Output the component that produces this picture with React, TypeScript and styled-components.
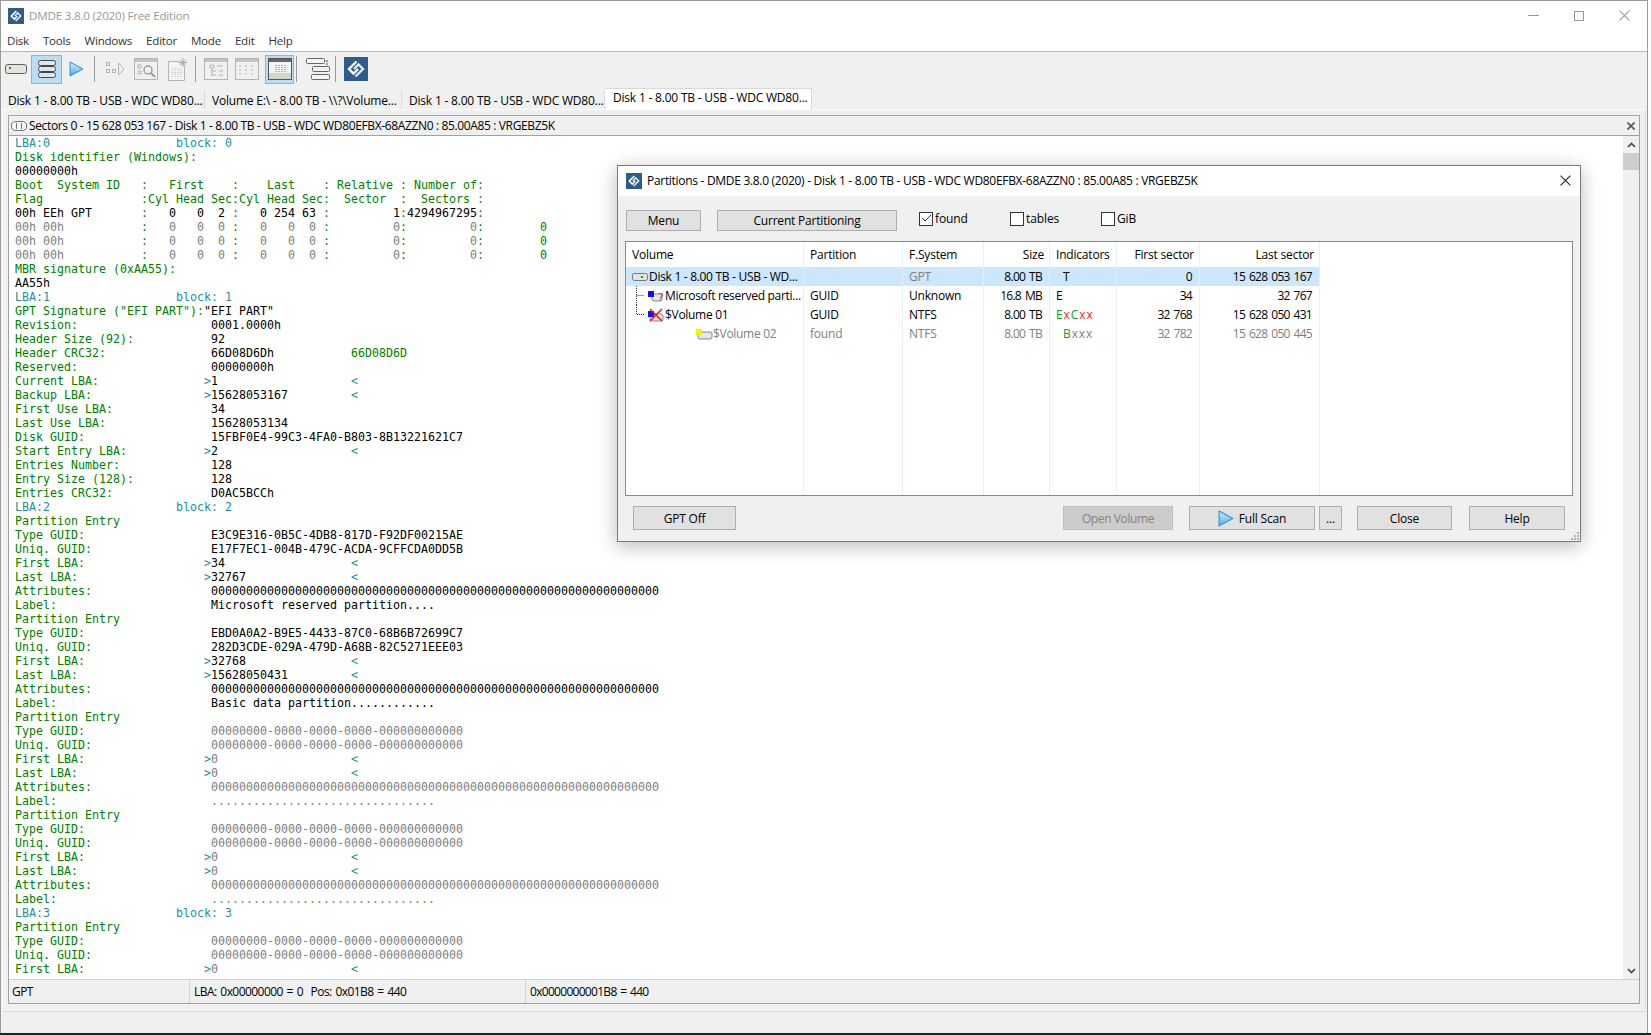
import React from 'react';
import styled, { createGlobalStyle } from 'styled-components';

const GlobalStyle = createGlobalStyle`
  html, body {
    margin: 0;
    padding: 0;
    background: #fff;
    overflow: hidden;
  }
  body {
    font-family: "Open Sans", "Noto Sans", sans-serif;
    font-size: 11.6px;
    color: #000;
  }
`;

const Desktop = styled.div`
  position: relative;
  width: 1651px;
  height: 1035px;
  background: #fff;
  border-bottom: 2px solid #222;
  box-sizing: border-box;
`;

const Frame = styled.div`
  display: flex;
  flex-direction: column;
  width: 1648px;
  height: 1033px;
  box-sizing: border-box;
  border: 1px solid #9a9a9a;
  border-bottom: none;
  background: #f0f0f0;
`;

const TitleBar = styled.div`
  display: flex;
  align-items: center;
  height: 30px;
  flex: none;
  padding-left: 7px;
  background: #fff;
  color: #999;
  font-size: 11.6px;
  letter-spacing: -0.2px;
`;

const TitleText = styled.span`
  margin-left: 5px;
  margin-top: -1px;
`;

const WindowControls = styled.div`
  display: flex;
  align-items: center;
  margin-left: auto;
  margin-top: -1px;
  padding-right: 17px;
  gap: 35px;
`;

const MenuBar = styled.div`
  display: flex;
  align-items: center;
  height: 21px;
  flex: none;
  box-sizing: border-box;
  background: #fff;
  border-bottom: 1px solid #b8b8b8;
  padding: 0 0 2px 6px;
  gap: 14px;
  color: #333;
  font-size: 11.6px;
  letter-spacing: -0.25px;
`;

const Toolbar = styled.div`
  display: flex;
  align-items: center;
  height: 36px;
  flex: none;
  box-sizing: border-box;
  padding: 0 0 2px 2px;
`;

const ToolButton = styled.div<{ $w: number; $gap?: number; $active?: boolean }>`
  display: flex;
  align-items: center;
  justify-content: center;
  flex: none;
  box-sizing: border-box;
  width: ${(p) => p.$w}px;
  height: 29px;
  margin-left: ${(p) => p.$gap ?? 0}px;
  background: ${(p) => (p.$active ? '#bcdcf4' : 'transparent')};
  border: 1px solid ${(p) => (p.$active ? '#7cb8e8' : 'transparent')};
`;

const ToolSep = styled.div<{ $gap: number }>`
  width: 1px;
  height: 26px;
  flex: none;
  margin-left: ${(p) => p.$gap}px;
  background: #9a9a9a;
`;

const TabBar = styled.div`
  display: flex;
  align-items: flex-end;
  height: 21px;
  flex: none;
`;

const Tab = styled.div<{ $w: number; $active?: boolean }>`
  flex: none;
  box-sizing: border-box;
  width: ${(p) => p.$w}px;
  height: ${(p) => (p.$active ? 22 : 19)}px;
  margin-bottom: ${(p) => (p.$active ? -1 : 0)}px;
  padding-left: ${(p) => (p.$active ? 8 : 7)}px;
  line-height: ${(p) => (p.$active ? 18 : 19)}px;
  white-space: nowrap;
  font-size: 12px;
  letter-spacing: -0.2px;
  background: ${(p) => (p.$active ? '#fff' : '#f0f0f0')};
  border-right: 1px solid #d9d9d9;
  border-top: 1px solid ${(p) => (p.$active ? '#d9d9d9' : '#f0f0f0')};
  position: relative;
  z-index: 1;
`;

const TabPage = styled.div`
  display: flex;
  flex: none;
  height: 903px;
  margin-right: 1px;
  margin-left: 1px;
  box-sizing: border-box;
  padding: 5px 5px 7px 5px;
  border: 1px solid #fff;
  border-right-color: #e0e0e0;
  border-bottom-color: #dcdcdc;
`;

const Panel = styled.div`
  display: flex;
  flex-direction: column;
  flex: 1;
  min-width: 0;
  border: 1px solid #a0a0a0;
`;

const PanelTitle = styled.div`
  display: flex;
  align-items: center;
  height: 19px;
  flex: none;
  padding-left: 2px;
  background: #f0f0f0;
  border-bottom: 1px solid #a0a0a0;
  font-size: 12px;
`;

const PanelTitleText = styled.span`
  margin-left: 2px;
  white-space: nowrap;
  letter-spacing: -0.36px;
`;

const PanelClose = styled.div`
  margin-left: auto;
  display: flex;
  padding-right: 4px;
`;

const PanelBody = styled.div`
  display: flex;
  flex: 1;
  min-height: 0;
  background: #fff;
`;

const HexView = styled.pre`
  flex: 1;
  margin: 0;
  padding: 0 0 0 6px;
  overflow: hidden;
  font-family: "DejaVu Sans Mono", "Liberation Mono", monospace;
  font-size: 11.63px;
  line-height: 14px;
  color: #000;
`;

const HexLine = styled.div`
  height: 14px;
  white-space: pre;
`;

const Ink = styled.span<{ $c: string }>`
  color: ${(p) => p.$c};
`;

const ScrollBar = styled.div`
  display: flex;
  flex-direction: column;
  width: 16px;
  flex: none;
  background: #f0f0f0;
`;

const ScrollArrow = styled.div`
  display: flex;
  align-items: center;
  justify-content: center;
  height: 17px;
  flex: none;
`;

const ScrollThumb = styled.div`
  height: 17px;
  flex: none;
  background: #cdcdcd;
`;

const ScrollSpace = styled.div`
  flex: 1;
`;

const StatusBar = styled.div`
  display: flex;
  align-items: center;
  height: 23px;
  flex: none;
  background: #f0f0f0;
  border-top: 1px solid #d0d0d0;
  font-size: 12px;
  letter-spacing: -0.55px;
  word-spacing: 1.2px;
`;

const StatusCell = styled.div<{ $w: number }>`
  display: flex;
  align-items: center;
  width: ${(p) => p.$w}px;
  height: 100%;
  flex: none;
  box-sizing: border-box;
  padding-left: 3px;
  border-right: 1px solid #d0d0d0;
  white-space: pre;
`;

const StatusCellWide = styled(StatusCell)`
  padding-left: 4px;
`;

const StatusCellLast = styled(StatusCellWide)`
  border-right: none;
  letter-spacing: -0.7px;
`;

const Dialog = styled.div`
  position: absolute;
  left: 617px;
  top: 165px;
  width: 964px;
  height: 377px;
  box-sizing: border-box;
  display: flex;
  flex-direction: column;
  border: 1px solid #7a7a7a;
  background: #f0f0f0;
  box-shadow: 0 4px 18px rgba(0, 0, 0, 0.28);
`;

const DialogTitle = styled.div`
  display: flex;
  align-items: center;
  height: 30px;
  flex: none;
  padding: 0 0 1px 8px;
  box-sizing: border-box;
  background: #fff;
  font-size: 12px;
`;

const DialogTitleText = styled.span`
  margin-left: 5px;
  white-space: nowrap;
  letter-spacing: -0.3px;
`;

const DialogClose = styled.div`
  display: flex;
  margin-left: auto;
  padding-right: 9px;
`;

const DialogTop = styled.div`
  display: flex;
  align-items: center;
  height: 21px;
  flex: none;
  margin-top: 14px;
  padding-left: 8px;
`;

const Button = styled.div<{ $w: number; $h?: number; $gap?: number; $disabled?: boolean }>`
  display: flex;
  align-items: center;
  justify-content: center;
  flex: none;
  box-sizing: border-box;
  width: ${(p) => p.$w}px;
  height: ${(p) => p.$h ?? 21}px;
  margin-left: ${(p) => p.$gap ?? 0}px;
  font-size: 12px;
  letter-spacing: ${(p) => (p.$disabled ? -0.4 : -0.2)}px;
  background: ${(p) => (p.$disabled ? '#cccccc' : '#e1e1e1')};
  color: ${(p) => (p.$disabled ? '#838383' : '#000')};
  border: 1px solid ${(p) => (p.$disabled ? '#bfbfbf' : '#adadad')};
  white-space: nowrap;
`;

const CheckField = styled.div<{ $gap?: number }>`
  display: flex;
  align-items: center;
  width: 91px;
  flex: none;
  margin-left: ${(p) => p.$gap ?? 0}px;
  margin-top: -4px;
  gap: 2px;
  font-size: 12px;
  letter-spacing: -0.1px;
`;

const CheckBox = styled.div`
  display: flex;
  align-items: center;
  justify-content: center;
  box-sizing: border-box;
  width: 14px;
  height: 14px;
  flex: none;
  background: #fff;
  border: 1px solid #333;
`;

const ListBox = styled.div`
  display: flex;
  flex-direction: column;
  height: 255px;
  flex: none;
  margin: 10px 7px 0 7px;
  box-sizing: border-box;
  background: #fff;
  border: 1px solid #8a8a8a;
  font-size: 12px;
  letter-spacing: -0.2px;
`;

const GRID = '178px 99px 81px 66px 67px 83px 120px';

const ListRow = styled.div<{ $selected?: boolean; $muted?: boolean }>`
  display: grid;
  grid-template-columns: ${GRID};
  width: 694px;
  height: 19px;
  flex: none;
  line-height: 18px;
  white-space: nowrap;
  background: ${(p) => (p.$selected ? '#cce6fc' : 'transparent')};
  color: ${(p) => (p.$muted ? '#808080' : '#000')};
`;

const ListHead = styled(ListRow)`
  height: 25px;
  line-height: 24px;
`;

const ListFill = styled(ListRow)`
  flex: 1;
`;

const Cell = styled.div<{ $right?: boolean; $muted?: boolean; $num?: boolean }>`
  display: flex;
  align-items: center;
  justify-content: ${(p) => (p.$right ? 'flex-end' : 'flex-start')};
  box-sizing: border-box;
  padding: ${(p) => (p.$right ? '0 7px 0 0' : '0 0 0 6px')};
  border-right: 1px solid #e6f0fb;
  overflow: hidden;
  color: ${(p) => (p.$muted ? '#808080' : 'inherit')};
  letter-spacing: ${(p) => (p.$num ? '-0.72px' : 'inherit')};
  word-spacing: ${(p) => (p.$num ? '1.5px' : 'normal')};

  svg {
    flex: none;
  }
`;

const VolumeCell = styled(Cell)<{ $indent: number }>`
  padding-left: ${(p) => p.$indent}px;
  letter-spacing: -0.3px;
`;

const HeadCell = styled(Cell)`
  padding-right: ${(p) => (p.$right ? 5 : 0)}px;
`;

const Marks = styled.span<{ $pad: number }>`
  padding-left: ${(p) => p.$pad}px;
  letter-spacing: 0.9px;
`;

const DialogBottom = styled.div`
  display: flex;
  align-items: center;
  height: 24px;
  flex: none;
  margin-top: 10px;
  padding-left: 15px;
`;

const ScanLabel = styled.span`
  margin-left: 5px;
`;

const Grip = styled.div`
  position: absolute;
  right: 1px;
  bottom: 1px;
  display: flex;
`;

const Logo: React.FC<{ size: number }> = ({ size }) => (
  <svg width={size} height={size} viewBox="0 0 24 24">
    <rect width="24" height="24" fill="#2f5c88" />
    <path d="M12.5 4.5 L5 12 L9.5 16.5 L14 12" fill="none" stroke="#fff" strokeWidth="2.4" />
    <path d="M11.5 19.5 L19 12 L14.5 7.5 L10 12" fill="none" stroke="#dfe9f2" strokeWidth="2.4" />
  </svg>
);

const DriveIcon: React.FC = () => (
  <svg width="22" height="12" viewBox="0 0 22 12">
    <rect x="0.5" y="1.5" width="21" height="9" rx="2" fill="#e4e2dc" stroke="#5f5f5f" />
    <rect x="4" y="4" width="2" height="2" fill="#1aa51a" />
  </svg>
);

const StackIcon: React.FC = () => (
  <svg width="20" height="18" viewBox="0 0 20 18" fill="#dfe6ea" stroke="#444">
    <rect x="1.5" y="0.5" width="17" height="5" rx="2" />
    <rect x="1.5" y="6.5" width="17" height="5" rx="2" />
    <rect x="1.5" y="12.5" width="17" height="5" rx="2" />
  </svg>
);

const PlayIcon: React.FC<{ w: number; h: number }> = ({ w, h }) => (
  <svg width={w} height={h} viewBox="0 0 15 16">
    <defs>
      <linearGradient id="playFill" x1="0" y1="0" x2="0" y2="1">
        <stop offset="0" stopColor="#d4efff" />
        <stop offset="1" stopColor="#4ea8ea" />
      </linearGradient>
    </defs>
    <path d="M1 1 L14 8 L1 15 Z" fill="url(#playFill)" stroke="#2f8fdc" />
  </svg>
);

const FlowIcon: React.FC = () => (
  <svg width="20" height="18" viewBox="0 0 20 18" fill="none" stroke="#b4b4b4">
    <rect x="1.5" y="2.5" width="3" height="3" />
    <rect x="1.5" y="9.5" width="3" height="3" />
    <rect x="7.5" y="9.5" width="3" height="3" />
    <path d="M13.5 3 L19 9 L13.5 15 Z" />
  </svg>
);

const PaneIcon: React.FC<{ kind: 'find' | 'tree' | 'list' | 'grid'; dark?: boolean }> = ({ kind, dark }) => (
  <svg width="24" height="22" viewBox="0 0 24 22" fill="none" stroke={dark ? '#555' : '#b4b4b4'}>
    <rect x="0.5" y="0.5" width="23" height="21" fill={dark ? '#f4f4f4' : '#f0f0f0'} />
    <rect x="1" y="1" width="22" height="3" fill={dark ? '#666' : '#c4c4c4'} stroke="none" />
    {kind === 'find' && (
      <>
        <path d="M4 7h3v3H4zM4 13h3v3H4z" />
        <circle cx="14" cy="12" r="4" stroke="#9a9a9a" strokeWidth="1.4" />
        <path d="M17 15l4 4" stroke="#9a9a9a" strokeWidth="2" />
      </>
    )}
    {kind === 'tree' && (
      <path d="M6 7h4v3H6zM8 10v8M8 13h4M8 17h4M15 13h4M15 17h4M13 8h6" />
    )}
    {kind === 'list' && (
      <path d="M4 8h3M4 12h3M4 16h3M10 8h3M10 12h3M10 16h3M16 8h3M16 12h3M16 16h3" strokeDasharray="2 1" />
    )}
    {kind === 'grid' && (
      <>
        <rect x="1" y="15" width="22" height="6" fill="#d8d2cc" stroke="none" />
        <path d="M8 7v7M11 7v7M14 7v7M17 7v7" stroke="#777" strokeDasharray="1 1" />
      </>
    )}
  </svg>
);

const PageIcon: React.FC = () => (
  <svg width="22" height="24" viewBox="0 0 22 24" fill="none" stroke="#b4b4b4">
    <path d="M1.5 4.5H12L17.5 9V23.5H1.5Z" fill="#f4f4f4" />
    <path d="M5 11v9M8 11v9M11 11v9M14 11v9" strokeDasharray="1 1" />
    <path d="M16 1v9M11.5 5.5h9M13 2.5l6 6M19 2.5l-6 6" stroke="#a8a8a8" />
  </svg>
);

const RowsIcon: React.FC = () => (
  <svg width="24" height="24" viewBox="0 0 24 24" fill="#f4f4f4" stroke="#666">
    <rect x="0.5" y="1.5" width="18" height="5" rx="1" />
    <rect x="6.5" y="9.5" width="17" height="5" rx="1" />
    <rect x="5.5" y="17.5" width="18" height="5" rx="1" />
    <path d="M20 4h2M20 7h2" stroke="#444" />
  </svg>
);

const SmallDrive: React.FC<{ led?: string }> = ({ led }) => (
  <svg width="17" height="10" viewBox="0 0 17 10">
    <rect x="0.5" y="1.5" width="15" height="7" rx="2" fill="#e6e4df" stroke="#777" />
    {led && <rect x="9" y="4" width="2" height="2" fill={led} />}
  </svg>
);

const ReservedIcon: React.FC = () => (
  <svg width="21" height="12" viewBox="0 0 21 12">
    <rect x="8" y="4" width="10" height="7" rx="2" fill="#e6e4df" stroke="#888" />
    <rect x="4" y="1" width="6" height="6" fill="#1414e0" />
    <text x="14.5" y="10.5" fontSize="11" fill="#555" fontFamily="Open Sans, sans-serif">?</text>
  </svg>
);

const DamagedIcon: React.FC = () => (
  <svg width="21" height="14" viewBox="0 0 21 14">
    <rect x="6" y="6" width="13" height="7" rx="2" fill="#e6e4df" stroke="#888" />
    <rect x="4" y="3" width="6" height="6" fill="#1414e0" />
    <path d="M6 1 L18 13 M18 1 L6 13" stroke="#f01818" strokeWidth="1.5" />
  </svg>
);

const FoundIcon: React.FC = () => (
  <svg width="17" height="12" viewBox="0 0 17 12">
    <rect x="2" y="4" width="14" height="7" rx="2" fill="#e6e4df" stroke="#888" />
    <rect x="0" y="1" width="6" height="6" fill="#f4f400" />
  </svg>
);

const TreeGuide: React.FC<{ last?: boolean }> = ({ last }) => (
  <svg width="8" height="19" viewBox="0 0 8 19" fill="none" stroke="#333" strokeDasharray="1 1">
    <path d={last ? 'M0.5 0V9.5H8' : 'M0.5 0V19M0.5 9.5H8'} />
  </svg>
);

const Cross: React.FC<{ size: number; color: string; w?: number }> = ({ size, color, w = 1 }) => (
  <svg width={size} height={size} viewBox="0 0 10 10" stroke={color} strokeWidth={w} fill="none">
    <path d="M0.5 0.5 L9.5 9.5 M9.5 0.5 L0.5 9.5" />
  </svg>
);

const Chevron: React.FC<{ down?: boolean }> = ({ down }) => (
  <svg width="9" height="6" viewBox="0 0 9 6" fill="none" stroke="#444" strokeWidth="1.6">
    <path d={down ? 'M1 1l3.5 3.5L8 1' : 'M1 5l3.5-3.5L8 5'} />
  </svg>
);

const ChipIcon: React.FC = () => (
  <svg width="16" height="12" viewBox="0 0 16 12" fill="#f4f4f4" stroke="#777">
    <path d="M3.5 1.5h9l3 2v5l-3 2h-9l-3-2v-5Z" />
    <path d="M5.5 3v6M10.5 3v6" />
  </svg>
);

const INK: Record<string, string> = {
  g: '#008000',
  k: '#000000',
  a: '#808080',
  t: '#1f8fa0',
};

const pad = (s: string, n: number) => s.padEnd(n, ' ');
const ZEROS = '0'.repeat(64);
const NULL_GUID = '00000000-0000-0000-0000-000000000000';

const field = (label: string, value: string, muted = false) =>
  `~g${pad(label, 28)}~${muted ? 'a' : 'k'}${value}`;
const bound = (label: string, value: string, muted = false) =>
  `~g${pad(label, 27)}~t>~${muted ? 'a' : 'k'}${pad(value, 20)}~t<`;
const blockHead = (n: number) => `~t${pad(`LBA:${n}`, 23)}block: ${n}`;
const zeroRow = '~a00h 00h           ~g:~a   0   0  0 ~g:~a   0   0  0 ~g:~a         0~g:~a         0~g:        0';

const entry = (type: string, uniq: string, first: string, last: string, label: string) => [
  '~gPartition Entry',
  field('Type GUID:', type),
  field('Uniq. GUID:', uniq),
  bound('First LBA:', first),
  bound('Last LBA:', last),
  field('Attributes:', ZEROS),
  field('Label:', label),
];

const emptyEntry = [
  '~gPartition Entry',
  field('Type GUID:', NULL_GUID, true),
  field('Uniq. GUID:', NULL_GUID, true),
  bound('First LBA:', '0', true),
  bound('Last LBA:', '0', true),
  field('Attributes:', ZEROS, true),
  field('Label:', '.'.repeat(32), true),
];

const SECTOR_LINES: string[] = [
  blockHead(0),
  '~gDisk identifier (Windows):',
  '~k00000000h',
  '~gBoot  System ID   :   First    :    Last    : Relative : Number of:',
  '~gFlag              :Cyl Head Sec:Cyl Head Sec:  Sector  :  Sectors :',
  '~k00h EEh GPT       ~g:~k   0   0  2 ~g:~k   0 254 63 ~g:~k         1~g:~k4294967295~g:',
  zeroRow,
  zeroRow,
  zeroRow,
  '~gMBR signature (0xAA55):',
  '~kAA55h',
  blockHead(1),
  '~gGPT Signature ("EFI PART"):~k"EFI PART"',
  field('Revision:', '0001.0000h'),
  field('Header Size (92):', '92'),
  `${field('Header CRC32:', pad('66D08D6Dh', 20))}~g66D08D6D`,
  field('Reserved:', '00000000h'),
  bound('Current LBA:', '1'),
  bound('Backup LBA:', '15628053167'),
  field('First Use LBA:', '34'),
  field('Last Use LBA:', '15628053134'),
  field('Disk GUID:', '15FBF0E4-99C3-4FA0-B803-8B13221621C7'),
  bound('Start Entry LBA:', '2'),
  field('Entries Number:', '128'),
  field('Entry Size (128):', '128'),
  field('Entries CRC32:', 'D0AC5BCCh'),
  blockHead(2),
  ...entry(
    'E3C9E316-0B5C-4DB8-817D-F92DF00215AE',
    'E17F7EC1-004B-479C-ACDA-9CFFCDA0DD5B',
    '34',
    '32767',
    'Microsoft reserved partition....',
  ),
  ...entry(
    'EBD0A0A2-B9E5-4433-87C0-68B6B72699C7',
    '282D3CDE-029A-479D-A68B-82C5271EEE03',
    '32768',
    '15628050431',
    'Basic data partition............',
  ),
  ...emptyEntry,
  ...emptyEntry,
  blockHead(3),
  '~gPartition Entry',
  field('Type GUID:', NULL_GUID, true),
  field('Uniq. GUID:', NULL_GUID, true),
  bound('First LBA:', '0', true),
];

const SectorLine: React.FC<{ source: string }> = ({ source }) => (
  <HexLine>
    {source
      .split('~')
      .filter(Boolean)
      .map((part, i) => (
        <Ink key={i} $c={INK[part[0]]}>
          {part.slice(1)}
        </Ink>
      ))}
  </HexLine>
);

const MENUS = ['Disk', 'Tools', 'Windows', 'Editor', 'Mode', 'Edit', 'Help'];
const DISK_TAB = 'Disk 1 - 8.00 TB - USB - WDC WD80...';

const App: React.FC = () => (
  <Desktop>
    <GlobalStyle />
    <Frame>
      <TitleBar>
        <Logo size={16} />
        <TitleText>DMDE 3.8.0 (2020) Free Edition</TitleText>
        <WindowControls>
          <svg width="11" height="11" viewBox="0 0 11 11" stroke="#999"><path d="M0 5.5h11" /></svg>
          <svg width="10" height="10" viewBox="0 0 10 10" stroke="#999" fill="none"><rect x="0.5" y="0.5" width="9" height="9" /></svg>
          <Cross size={11} color="#999" />
        </WindowControls>
      </TitleBar>
      <MenuBar>
        {MENUS.map((m) => (
          <span key={m}>{m}</span>
        ))}
      </MenuBar>
      <Toolbar>
        <ToolButton $w={26}><DriveIcon /></ToolButton>
        <ToolButton $w={31} $gap={2} $active><StackIcon /></ToolButton>
        <ToolButton $w={24} $gap={2}><PlayIcon w={15} h={16} /></ToolButton>
        <ToolSep $gap={6} />
        <ToolButton $w={28} $gap={6}><FlowIcon /></ToolButton>
        <ToolButton $w={28} $gap={3}><PaneIcon kind="find" /></ToolButton>
        <ToolButton $w={27} $gap={4}><PageIcon /></ToolButton>
        <ToolSep $gap={4} />
        <ToolButton $w={28} $gap={6}><PaneIcon kind="tree" /></ToolButton>
        <ToolButton $w={28} $gap={3}><PaneIcon kind="list" /></ToolButton>
        <ToolButton $w={29} $gap={4} $active><PaneIcon kind="grid" dark /></ToolButton>
        <ToolSep $gap={2} />
        <ToolButton $w={27} $gap={7}><RowsIcon /></ToolButton>
        <ToolSep $gap={4} />
        <ToolButton $w={26} $gap={7}><Logo size={24} /></ToolButton>
      </Toolbar>
      <TabBar>
        <Tab $w={204}>{DISK_TAB}</Tab>
        <Tab $w={197}>Volume E:\ - 8.00 TB - \\?\Volume...</Tab>
        <Tab $w={203}>{DISK_TAB}</Tab>
        <Tab $w={207} $active>{DISK_TAB}</Tab>
      </TabBar>
      <TabPage>
        <Panel>
          <PanelTitle>
            <ChipIcon />
            <PanelTitleText>
              Sectors 0 - 15 628 053 167 - Disk 1 - 8.00 TB - USB - WDC WD80EFBX-68AZZN0 : 85.00A85 : VRGEBZ5K
            </PanelTitleText>
            <PanelClose><Cross size={8} color="#555" w={2} /></PanelClose>
          </PanelTitle>
          <PanelBody>
            <HexView>
              {SECTOR_LINES.map((line, i) => (
                <SectorLine key={i} source={line} />
              ))}
            </HexView>
            <ScrollBar>
              <ScrollArrow><Chevron /></ScrollArrow>
              <ScrollThumb />
              <ScrollSpace />
              <ScrollArrow><Chevron down /></ScrollArrow>
            </ScrollBar>
          </PanelBody>
          <StatusBar>
            <StatusCell $w={181}>GPT</StatusCell>
            <StatusCellWide $w={336}>LBA: 0x00000000 = 0  Pos: 0x01B8 = 440</StatusCellWide>
            <StatusCellLast $w={300}>0x0000000001B8 = 440</StatusCellLast>
          </StatusBar>
        </Panel>
      </TabPage>
    </Frame>

    <Dialog>
      <DialogTitle>
        <Logo size={16} />
        <DialogTitleText>
          Partitions - DMDE 3.8.0 (2020) - Disk 1 - 8.00 TB - USB - WDC WD80EFBX-68AZZN0 : 85.00A85 : VRGEBZ5K
        </DialogTitleText>
        <DialogClose><Cross size={11} color="#222" /></DialogClose>
      </DialogTitle>
      <DialogTop>
        <Button $w={75}>Menu</Button>
        <Button $w={180} $gap={16}>Current Partitioning</Button>
        <CheckField $gap={22}>
          <CheckBox>
            <svg width="11" height="9" viewBox="0 0 11 9" fill="none" stroke="#333"><path d="M1 4l3 3 6-6" /></svg>
          </CheckBox>
          found
        </CheckField>
        <CheckField><CheckBox />tables</CheckField>
        <CheckField><CheckBox />GiB</CheckField>
      </DialogTop>
      <ListBox>
        <ListHead>
          <HeadCell>Volume</HeadCell>
          <HeadCell>Partition</HeadCell>
          <HeadCell>F.System</HeadCell>
          <HeadCell $right>Size</HeadCell>
          <HeadCell>Indicators</HeadCell>
          <HeadCell $right>First sector</HeadCell>
          <HeadCell $right>Last sector</HeadCell>
        </ListHead>
        <ListRow $selected>
          <VolumeCell $indent={6}><SmallDrive led="#1aa51a" /><span>Disk 1 - 8.00 TB - USB - WD...</span></VolumeCell>
          <Cell />
          <Cell $muted>GPT</Cell>
          <Cell $right $num>8.00 TB</Cell>
          <Cell><Marks $pad={7}>T</Marks></Cell>
          <Cell $right $num>0</Cell>
          <Cell $right $num>15 628 053 167</Cell>
        </ListRow>
        <ListRow>
          <VolumeCell $indent={10}><TreeGuide /><ReservedIcon /><span>Microsoft reserved parti...</span></VolumeCell>
          <Cell>GUID</Cell>
          <Cell>Unknown</Cell>
          <Cell $right $num>16.8 MB</Cell>
          <Cell>E</Cell>
          <Cell $right $num>34</Cell>
          <Cell $right $num>32 767</Cell>
        </ListRow>
        <ListRow>
          <VolumeCell $indent={10}><TreeGuide last /><DamagedIcon /><span>$Volume 01</span></VolumeCell>
          <Cell>GUID</Cell>
          <Cell>NTFS</Cell>
          <Cell $right $num>8.00 TB</Cell>
          <Cell>
            <Marks $pad={0}>
              <Ink $c="#10a010">E</Ink><Ink $c="#f01818">x</Ink><Ink $c="#10a010">C</Ink><Ink $c="#f01818">xx</Ink>
            </Marks>
          </Cell>
          <Cell $right $num>32 768</Cell>
          <Cell $right $num>15 628 050 431</Cell>
        </ListRow>
        <ListRow $muted>
          <VolumeCell $indent={70}><FoundIcon /><span>$Volume 02</span></VolumeCell>
          <Cell>found</Cell>
          <Cell>NTFS</Cell>
          <Cell $right $num>8.00 TB</Cell>
          <Cell><Marks $pad={7}><Ink $c="#10a010">B</Ink>xxx</Marks></Cell>
          <Cell $right $num>32 782</Cell>
          <Cell $right $num>15 628 050 445</Cell>
        </ListRow>
        <ListFill>
          <Cell /><Cell /><Cell /><Cell /><Cell /><Cell /><Cell />
        </ListFill>
      </ListBox>
      <DialogBottom>
        <Button $w={103} $h={24}>GPT Off</Button>
        <Button $w={110} $h={24} $gap={327} $disabled>Open Volume</Button>
        <Button $w={126} $h={24} $gap={16}><PlayIcon w={16} h={17} /><ScanLabel>Full Scan</ScanLabel></Button>
        <Button $w={23} $h={24} $gap={4}>...</Button>
        <Button $w={95} $h={24} $gap={15}>Close</Button>
        <Button $w={96} $h={24} $gap={17}>Help</Button>
      </DialogBottom>
      <Grip>
        <svg width="9" height="9" viewBox="0 0 9 9" fill="#b0b0b0">
          <path d="M7 1h2v2H7zM4 4h2v2H4zM7 4h2v2H7zM1 7h2v2H1zM4 7h2v2H4zM7 7h2v2H7z" />
        </svg>
      </Grip>
    </Dialog>
  </Desktop>
);

export default App;
